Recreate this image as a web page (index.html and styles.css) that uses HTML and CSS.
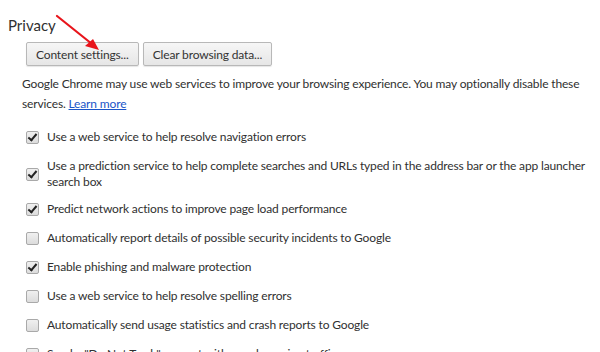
FILE: index.html
```html
<!DOCTYPE html>
<html lang="en">
<head>
    <meta charset="UTF-8">
    <title>Settings - Privacy</title>
    <link rel="stylesheet" href="styles.css">
</head>
<body>
    <section class="privacy">
        <h3>Privacy</h3>
        <div class="button-row">
            <button>Content settings...</button>
            <button>Clear browsing data...</button>
        </div>
        <p class="note">Google Chrome may use web services to improve your browsing experience. You may optionally disable these services. <a href="#">Learn more</a></p>

        <div class="options">
            <label class="option"><span class="box checked"></span><span>Use a web service to help resolve navigation errors</span></label>
            <label class="option wrapped"><span class="box checked"></span><span>Use a prediction service to help complete searches and URLs typed in the address bar or the app launcher search box</span></label>
            <label class="option"><span class="box checked"></span><span>Predict network actions to improve page load performance</span></label>
            <label class="option"><span class="box"></span><span>Automatically report details of possible security incidents to Google</span></label>
            <label class="option"><span class="box checked"></span><span>Enable phishing and malware protection</span></label>
            <label class="option"><span class="box"></span><span>Use a web service to help resolve spelling errors</span></label>
            <label class="option"><span class="box"></span><span>Automatically send usage statistics and crash reports to Google</span></label>
            <label class="option"><span class="box"></span><span>Send a "Do Not Track" request with your browsing traffic</span></label>
        </div>
    </section>

    <svg class="arrow" width="60" height="60" viewBox="0 0 60 60">
        <line x1="5" y1="4" x2="40" y2="32" stroke="#e8141b" stroke-width="2.2" stroke-linecap="round"/>
        <polygon points="47,38 33,34 41,27" fill="#e8141b"/>
    </svg>
</body>
</html>
```

FILE: styles.css
```css
body {
    margin: 0;
    font-family: Lato, sans-serif;
    font-size: 12px;
    letter-spacing: -0.15px;
    color: #303030;
    background: #fff;
    position: relative;
    overflow: hidden;
}
.privacy {
    padding: 14px 0 0 8px;
}
h3 {
    margin: 0;
    font-size: 15px;
    font-weight: normal;
    letter-spacing: 0;
    color: #303030;
    line-height: 22px;
}
.button-row {
    display: flex;
    gap: 4px;
    margin: 6px 0 0 18px;
}
button {
    font-family: inherit;
    font-size: 12px;
    letter-spacing: -0.15px;
    color: #333;
    height: 24px;
    padding: 0 9px;
    border: 1px solid #b8b8b8;
    border-radius: 2px;
    background: linear-gradient(#f6f6f6, #e6e6e6);
    box-shadow: 0 1px 1px rgba(0,0,0,0.1);
}
.note {
    margin: 8px 0 0 14px;
    line-height: 20px;
    width: 575px;
}
.note a {
    color: #1a55c8;
}
.options {
    margin: 15px 0 0 18px;
    display: flex;
    flex-direction: column;
    gap: 13px;
}
.option {
    display: flex;
    align-items: center;
    gap: 8px;
    line-height: 16px;
    width: 572px;
}
.option.wrapped {
    margin-bottom: -2px;
}
.box {
    flex: none;
    width: 11px;
    height: 11px;
    border: 1px solid #a9a9a9;
    border-radius: 2px;
    background: linear-gradient(#f0f0f0, #dcdcdc);
    position: relative;
}
.box.checked::after {
    content: "";
    position: absolute;
    left: 3px;
    top: 0px;
    width: 3px;
    height: 7px;
    border: solid #222;
    border-width: 0 2px 2px 0;
    transform: rotate(40deg);
}
.arrow {
    position: absolute;
    left: 52px;
    top: 12px;
}
```
